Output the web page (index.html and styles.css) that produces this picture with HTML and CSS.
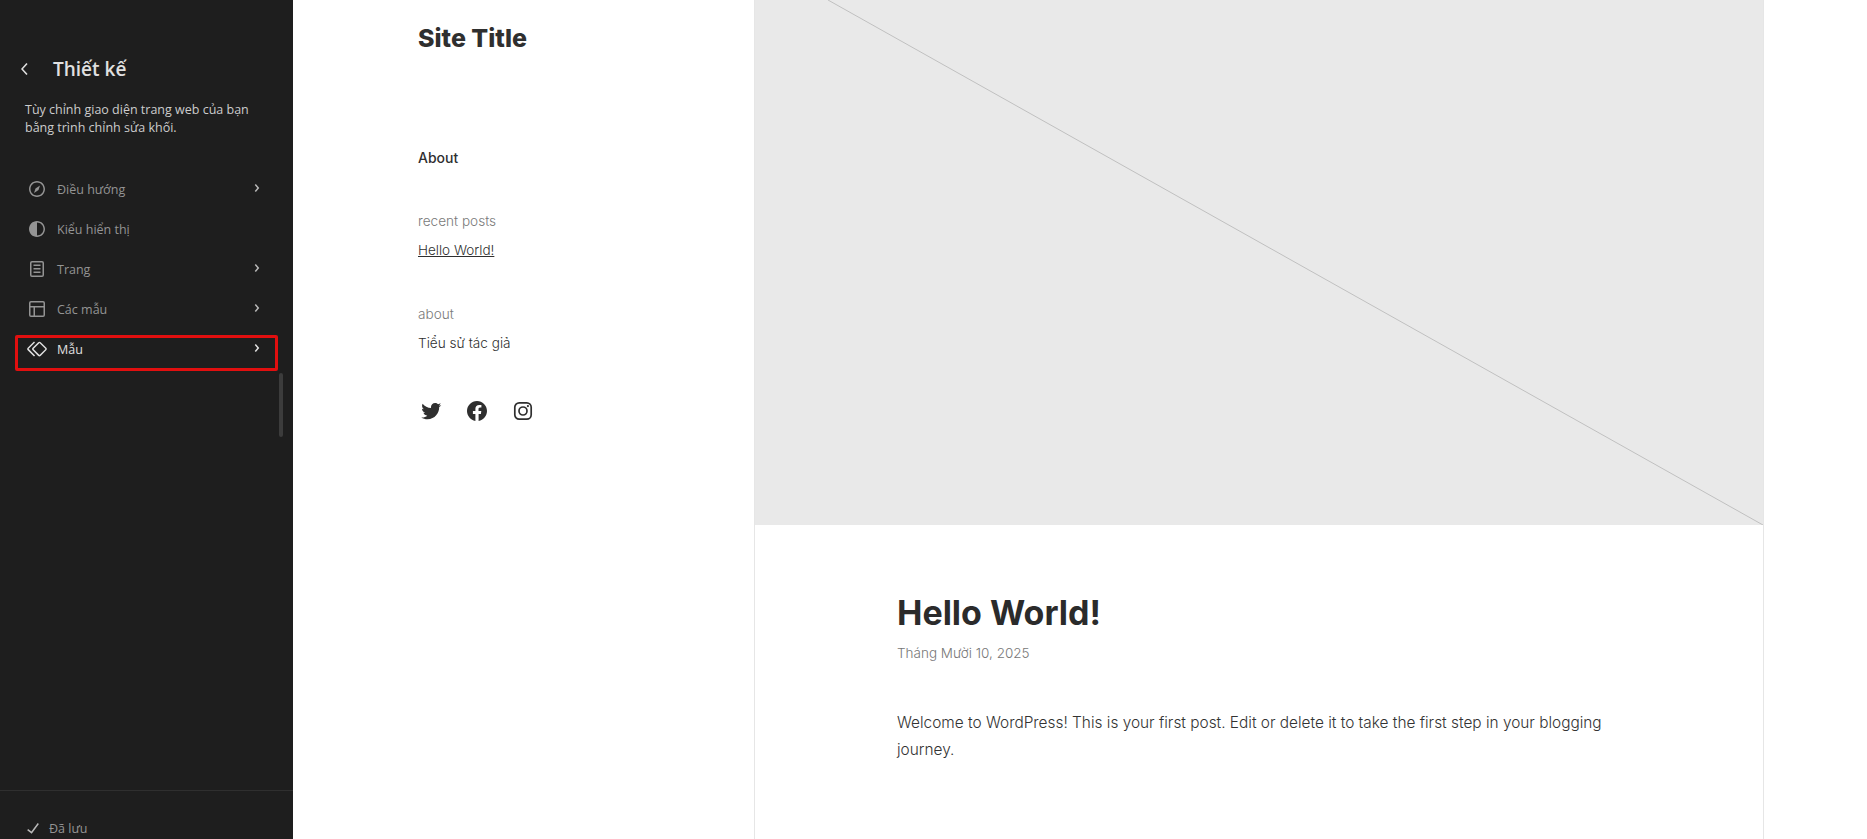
FILE: index.html
```html
<!DOCTYPE html>
<html lang="vi">
<head>
  <meta charset="UTF-8">
  <title>Thiết kế</title>
  <meta name="viewport" content="width=device-width, initial-scale=1.0">
  <link rel="stylesheet" href="styles.css">
</head>
<body>
  <aside class="sidebar">
    <div class="sidebar-head">
      <svg class="back-icon" viewBox="0 0 24 24"><path d="M14.6 7l-1.2-1L8 12l5.4 6 1.2-1-4.6-5z"/></svg>
      <h2>Thiết kế</h2>
    </div>
    <p class="sidebar-desc">Tùy chỉnh giao diện trang web của bạn bằng trình chỉnh sửa khối.</p>

    <nav class="menu">
      <div class="menu-item">
        <svg class="menu-icon" viewBox="0 0 24 24"><path d="M12 4c-4.4 0-8 3.6-8 8s3.6 8 8 8 8-3.6 8-8-3.6-8-8-8zm0 14.5c-3.6 0-6.5-2.9-6.5-6.5S8.4 5.5 12 5.5s6.5 2.9 6.5 6.5-2.9 6.5-6.5 6.5zM9 16l4.5-3L15 8.4l-4.5 3L9 16z"/></svg>
        <span class="menu-label">Điều hướng</span>
        <svg class="menu-arrow" viewBox="0 0 24 24"><path d="M10.86 8.04l3.42 3.99-3.42 3.99-1.14-.98 2.58-3.01-2.58-3.01z"/></svg>
      </div>
      <div class="menu-item">
        <svg class="menu-icon" viewBox="0 0 24 24"><path d="M12 4c-4.4 0-8 3.6-8 8s3.6 8 8 8 8-3.6 8-8-3.6-8-8-8zm0 14.5V5.500c3.600 0 6.500 2.900 6.500 6.500s-2.900 6.500-6.500 6.500z"/></svg>
        <span class="menu-label">Kiểu hiển thị</span>
      </div>
      <div class="menu-item">
        <svg class="menu-icon" viewBox="0 0 24 24"><path d="M15.500 7.500h-7V9h7zM8.500 11h7v1.500h-7zM15.500 14.500h-7V16h7z"/><path fill-rule="evenodd" d="M17 4H7a2 2 0 0 0-2 2v12a2 2 0 0 0 2 2h10a2 2 0 0 0 2-2V6a2 2 0 0 0-2-2zm0 1.500H7a.5.5 0 0 0-.5.5v12a.5.5 0 0 0 .5.5h10a.5.5 0 0 0 .5-.5V6a.5.5 0 0 0-.5-.5z"/></svg>
        <span class="menu-label">Trang</span>
        <svg class="menu-arrow" viewBox="0 0 24 24"><path d="M10.86 8.04l3.42 3.99-3.42 3.99-1.14-.98 2.58-3.01-2.58-3.01z"/></svg>
      </div>
      <div class="menu-item">
        <svg class="menu-icon" viewBox="0 0 24 24"><path d="M18 5.500H6a.5.5 0 00-.5.5v3h13V6a.5.5 0 00-.5-.5zm.5 5H10v8h8a.5.5 0 00.5-.5v-7.500zm-10 0h-3V18a.5.5 0 00.5.5h2.500v-8zM6 4h12a2 2 0 012 2v12a2 2 0 01-2 2H6a2 2 0 01-2-2V6a2 2 0 012-2z"/></svg>
        <span class="menu-label">Các mẫu</span>
        <svg class="menu-arrow" viewBox="0 0 24 24"><path d="M10.86 8.04l3.42 3.99-3.42 3.99-1.14-.98 2.58-3.01-2.58-3.01z"/></svg>
      </div>
      <div class="menu-item active">
        <svg class="menu-icon" viewBox="0 0 24 24"><path d="M21.300 10.800l-5.600-5.600c-.7-.7-1.800-.7-2.500 0l-5.600 5.600c-.7.7-.7 1.800 0 2.500l5.600 5.600c.3.3.8.5 1.200.5s.9-.2 1.200-.5l5.600-5.600c.8-.7.8-1.900.1-2.500zm-1 1.400l-5.600 5.600c-.1.1-.3.1-.4 0l-5.600-5.600c-.1-.1-.1-.3 0-.4l5.600-5.600s.1-.1.2-.1.1 0 .2.1l5.600 5.600c.1.1.1.3 0 .4zm-16.600-.4L10 5.500l-1-1-6.300 6.300c-.7.7-.7 1.800 0 2.500L9 19.500l1.100-1.100-6.300-6.300c-.2 0-.2-.2-.1-.3z"/></svg>
        <span class="menu-label">Mẫu</span>
        <svg class="menu-arrow" viewBox="0 0 24 24"><path d="M10.86 8.04l3.42 3.99-3.42 3.99-1.14-.98 2.58-3.01-2.58-3.01z"/></svg>
        <div class="highlight"></div>
      </div>
    </nav>
    <div class="scroll-thumb"></div>

    <div class="sidebar-foot">
      <svg class="check-icon" viewBox="0 0 24 24"><path d="M16.700 7.100l-6.300 8.500-3.300-2.500-.9 1.200 4.500 3.400L17.900 8z"/></svg>
      <span>Đã lưu</span>
    </div>
  </aside>

  <main class="preview">
    <section class="left-col">
      <h1 class="site-title">Site Title</h1>
      <div class="page-link">About</div>

      <h3 class="widget-title recent">recent posts</h3>
      <a class="post-link" href="#">Hello World!</a>

      <h3 class="widget-title about">about</h3>
      <p class="author">Tiểu sử tác giả</p>

      <div class="social">
        <svg viewBox="0 0 24 24"><path d="M22.230 5.924c-.736.326-1.527.547-2.357.646.847-.508 1.498-1.312 1.804-2.270-.793.47-1.671.812-2.606.996C18.324 4.498 17.257 4 16.077 4c-2.266 0-4.103 1.837-4.103 4.103 0 .322.036.635.106.935C8.670 8.867 5.647 7.234 3.623 4.751c-.353.606-.556 1.311-.556 2.063 0 1.424.724 2.679 1.825 3.415-.673-.021-1.305-.206-1.859-.513v.052c0 1.988 1.414 3.647 3.292 4.023-.344.094-.707.144-1.081.144-.264 0-.521-.026-.772-.074.522 1.630 2.038 2.816 3.833 2.850-1.404 1.100-3.174 1.756-5.096 1.756-.331 0-.658-.019-.979-.057 1.816 1.164 3.973 1.843 6.290 1.843 7.547 0 11.675-6.252 11.675-11.675 0-.178-.004-.355-.012-.531.802-.578 1.497-1.301 2.047-2.124z"/></svg>
        <svg viewBox="0 0 24 24"><path d="M12 2C6.500 2 2 6.500 2 12c0 5 3.700 9.100 8.400 9.900v-7H7.900V12h2.500V9.800c0-2.500 1.500-3.900 3.800-3.900 1.100 0 2.200.2 2.200.2v2.500h-1.300c-1.200 0-1.600.8-1.600 1.600V12h2.800l-.4 2.900h-2.300v7C18.300 21.100 22 17 22 12c0-5.500-4.500-10-10-10z"/></svg>
        <svg class="insta" viewBox="0 0 24 24"><rect x="3.800" y="3.800" width="16.400" height="16.400" rx="4.400"/><circle cx="12" cy="12" r="4"/><circle class="dot" cx="16.900" cy="7.100" r="1.100"/></svg>
      </div>
    </section>

    <section class="post-col">
      <div class="featured">
        <svg viewBox="0 0 1008 525" preserveAspectRatio="none"><line x1="73" y1="0" x2="1008" y2="525"/></svg>
      </div>
      <article class="post">
        <h2 class="post-title">Hello World!</h2>
        <div class="post-date">Tháng Mười 10, 2025</div>
        <p class="post-text">Welcome to WordPress! This is your first post. Edit or delete it to take the first step in your blogging journey.</p>
      </article>
    </section>
  </main>
</body>
</html>
```

FILE: styles.css
```css
html, body {
  height: 100%;
}

body {
  margin: 0;
  height: 839px;
  overflow: hidden;
  display: flex;
  background: #fff;
  font-family: 'Inter', sans-serif;
  color: #2f2f2f;
}

/* sidebar */
.sidebar {
  position: relative;
  width: 293px;
  flex-shrink: 0;
  display: flex;
  flex-direction: column;
  background: #1e1e1e;
  font-family: 'Open Sans', sans-serif;
}

.sidebar-head {
  display: flex;
  align-items: center;
  padding: 56px 0 0 13px;
  height: 26px;
}

.back-icon {
  width: 24px;
  height: 24px;
  fill: #e0e0e0;
}

.sidebar-head h2 {
  margin: 0 0 0 16px;
  font-size: 19px;
  font-weight: 600;
  color: #e0e0e0;
}

.sidebar-desc {
  margin: 19px 30px 0 25px;
  font-size: 12.5px;
  line-height: 18px;
  color: #cccccc;
}

.menu {
  margin-top: 32px;
  padding-left: 25px;
}

.menu-item {
  position: relative;
  display: flex;
  align-items: center;
  height: 40px;
  width: 248px;
  color: #949494;
  fill: #949494;
}

.menu-icon {
  width: 24px;
  height: 24px;
  flex-shrink: 0;
}

.menu-label {
  margin-left: 8px;
  font-size: 12.5px;
}

.menu-arrow {
  width: 24px;
  height: 24px;
  margin-left: auto;
  margin-right: 4px;
  margin-top: -2px;
  fill: #b8b8b8;
}

.menu-item.active {
  color: #e0e0e0;
  fill: #e0e0e0;
}

.menu-item.active .menu-label {
  font-weight: 500;
}

.menu-item.active .menu-arrow {
  fill: #e0e0e0;
}

.highlight {
  position: absolute;
  left: -10px;
  top: 6px;
  width: 257px;
  height: 30px;
  border: 3px solid #e10f0f;
  border-radius: 2px;
}

.scroll-thumb {
  position: absolute;
  left: 279px;
  top: 373px;
  width: 4px;
  height: 64px;
  border-radius: 2px;
  background: #3c3c3c;
}

.sidebar-foot {
  margin-top: auto;
  height: 49px;
  border-top: 1px solid #2f2f2f;
  display: flex;
  align-items: center;
  padding: 27px 0 0 21px;
  font-size: 12.5px;
  color: #949494;
  box-sizing: border-box;
}

.check-icon {
  width: 24px;
  height: 24px;
  margin-top: -2px;
  fill: #b8b8b8;
  margin-right: 4px;
}

/* page preview */
.preview {
  flex: 1;
  display: flex;
}

.left-col {
  width: 461px;
  padding-left: 125px;
  box-sizing: border-box;
}

.site-title {
  margin: 22px 0 0;
  font-size: 25px;
  line-height: 32px;
  font-weight: 800;
}

.page-link {
  margin-top: 94px;
  font-size: 14px;
  line-height: 20px;
  font-weight: 500;
}

.widget-title {
  margin: 0;
  font-size: 13.6px;
  line-height: 20px;
  font-weight: 300;
  color: #7a7a7a;
}

.widget-title.recent {
  margin-top: 43px;
}

.widget-title.about {
  margin-top: 44px;
}

.post-link {
  display: inline-block;
  margin-top: 9px;
  font-size: 13.5px;
  line-height: 20px;
  font-weight: 300;
  color: #2f2f2f;
}

.author {
  margin: 9px 0 0;
  font-size: 13.6px;
  line-height: 20px;
  font-weight: 300;
}

.social {
  display: flex;
  gap: 22px;
  margin-top: 46px;
  padding-left: 1px;
  fill: #2f2f2f;
}

.social svg {
  width: 24px;
  height: 24px;
}

.social .insta {
  fill: none;
  stroke: #2f2f2f;
  stroke-width: 1.7;
}

.social .insta .dot {
  fill: #2f2f2f;
  stroke: none;
}

.post-col {
  width: 1010px;
  box-sizing: border-box;
  border-left: 1px solid #e6e6e6;
  border-right: 1px solid #e6e6e6;
}

.featured {
  height: 525px;
  background: #e9e9e9;
}

.featured svg {
  display: block;
  width: 100%;
  height: 100%;
}

.featured line {
  stroke: #c0c0c0;
  stroke-width: 1;
}

.post {
  padding: 66px 120px 0 142px;
}

.post-title {
  margin: 0;
  font-size: 34px;
  line-height: 44px;
  font-weight: 700;
  color: #2b2b2b;
}

.post-date {
  margin-top: 8px;
  font-size: 13.5px;
  line-height: 20px;
  font-weight: 300;
  color: #777;
}

.post-text {
  margin: 46px 0 0;
  font-size: 15.4px;
  line-height: 27px;
  font-weight: 300;
  color: #333;
}
```
